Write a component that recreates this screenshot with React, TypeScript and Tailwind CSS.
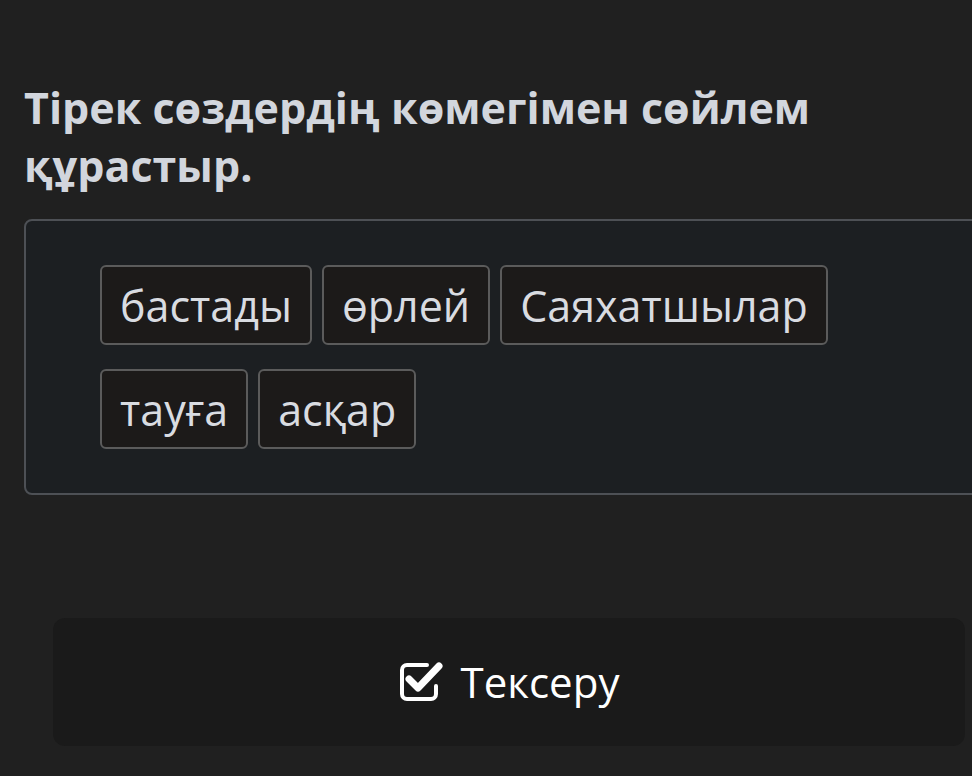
import React from "react";

const WORDS_ROW1 = ["бастады", "өрлей", "Саяхатшылар"];
const WORDS_ROW2 = ["тауға", "асқар"];
const WORDS = [...WORDS_ROW1, ...WORDS_ROW2];

function CheckIcon() {
  return (
    <svg width="44" height="40" viewBox="0 0 44 40" fill="none">
      {/* box outline, open at the top right where the tick leaves it */}
      <path
        d="M28 3 H8 A5 5 0 0 0 3 8 V32 A5 5 0 0 0 8 37 H32 A5 5 0 0 0 37 32 V24"
        stroke="white"
        strokeWidth="4"
        strokeLinecap="round"
      />
      <path
        d="M10 17 L19 26 L40 4"
        stroke="white"
        strokeWidth="7"
        strokeLinecap="round"
        strokeLinejoin="round"
      />
    </svg>
  );
}

function WordChip({ word }: { word: string }) {
  return (
    <div className="flex h-[80px] items-center rounded-md border-2 border-[#5b5b5b] bg-[#1c1a19] px-[18px] text-[43px] leading-none text-[#d9dce1]">
      {word}
    </div>
  );
}

export default function App() {
  return (
    <div className="min-h-[776px] w-[972px] overflow-hidden bg-[#202020] font-['Open_Sans','Noto_Sans',sans-serif]">
      <div className="pt-[79px] pl-[24px]">
        <h1 className="text-[43px] font-bold leading-[58px] text-[#d2d6dd]">
          Тірек сөздердің көмегімен сөйлем
          <br />
          құрастыр.
        </h1>

        <div className="mt-[24px] -mr-[20px] h-[276px] rounded-lg border-2 border-[#4d5055] bg-[#1c1f22] pt-[44px] pl-[74px]">
          <div className="flex max-w-[760px] flex-wrap gap-x-[10px] gap-y-[24px]">
            {WORDS.map((w) => (
              <WordChip key={w} word={w} />
            ))}
          </div>
        </div>
      </div>

      <div className="mt-[123px] ml-[53px] mr-[7px] flex h-[128px] items-center justify-center gap-[18px] rounded-xl bg-[#1a1a1a]">
        <CheckIcon />
        <span className="text-[42px] leading-none text-white">Тексеру</span>
      </div>
    </div>
  );
}
